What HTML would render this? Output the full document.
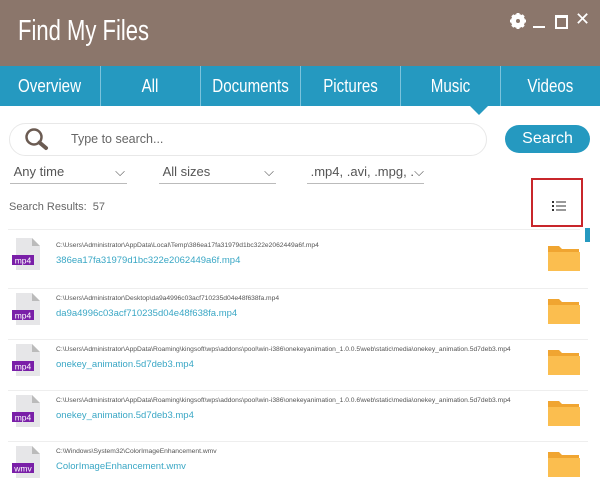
<!DOCTYPE html><html><head><style>
body{margin:0;width:600px;height:476px;overflow:hidden;background:#fff;font-family:"Liberation Sans",sans-serif;position:relative}
.a{position:absolute}
.hdr{left:0;top:0;width:600px;height:66px;background:#8b766b}
.title{left:18px;top:15px;color:#fff;font-size:29px;transform:scaleX(0.76);transform-origin:left}
.tabs{left:0;top:66px;width:600px;height:40px;background:#2599c0}
.tab{position:absolute;top:0;height:40px;line-height:40px;text-align:center;color:#fff;font-size:18px;width:100px;border-left:1px solid #7cc3dc;box-sizing:border-box}
.tab span{display:inline-block;transform:scaleX(0.84)}
.dd{position:absolute;top:164px;height:19px;border-bottom:1px solid #bbb;color:#555;font-size:13px}
.row{position:absolute;left:0;width:590px;height:51px}
.sep{position:absolute;left:8px;width:580px;top:0;border-top:1px solid #eee}
.fi{position:absolute;left:12px;top:6px;width:28px;height:32px}
.path{position:absolute;left:56px;top:10px;font-size:6.7px;color:#555;white-space:nowrap}
.name{position:absolute;left:56px;top:23px;font-size:9.5px;color:#3aa7c5}
.fold{position:absolute;left:547px;top:10px}
</style></head><body>
<div class="a hdr"></div>
<div class="a title">Find My Files</div>
<svg class="a" style="left:509px;top:12px" width="18" height="18" viewBox="0 0 18 18"><circle cx="9" cy="9" r="5.5" fill="none" stroke="#fff" stroke-width="3"/><g stroke="#fff" stroke-width="3"><line x1="9" y1="1" x2="9" y2="17"/><line x1="1" y1="9" x2="17" y2="9"/><line x1="3.3" y1="3.3" x2="14.7" y2="14.7"/><line x1="14.7" y1="3.3" x2="3.3" y2="14.7"/></g><circle cx="9" cy="9" r="2" fill="#8b766b"/></svg>
<div class="a" style="left:533px;top:26px;width:12px;height:2px;background:#fff"></div>
<div class="a" style="left:555px;top:15px;width:9px;height:9px;border:2px solid #fff;border-top-width:3px"></div>
<div class="a" style="left:575px;top:9px;color:#fff;font-size:18px">✕</div>
<div class="a tabs">
<div class="tab" style="left:0;border:0"><span>Overview</span></div>
<div class="tab" style="left:100px"><span>All</span></div>
<div class="tab" style="left:200px"><span>Documents</span></div>
<div class="tab" style="left:300px"><span>Pictures</span></div>
<div class="tab" style="left:400px"><span>Music</span></div>
<div class="tab" style="left:500px"><span>Videos</span></div>
</div>
<div class="a" style="left:470px;top:106px;width:0;height:0;border-left:9px solid transparent;border-right:9px solid transparent;border-top:9px solid #2599c0"></div>
<div class="a" style="left:9px;top:123px;width:476px;height:31px;border:1px solid #e8e8e8;border-radius:17px"></div>
<svg class="a" style="left:24px;top:127px" width="26" height="24" viewBox="0 0 26 24"><circle cx="10" cy="10" r="7.5" fill="none" stroke="#6b5b52" stroke-width="2.5"/><line x1="15.5" y1="15.5" x2="22" y2="21" stroke="#6b5b52" stroke-width="4" stroke-linecap="round"/></svg>
<div class="a" style="left:71px;top:132px;font-size:12.5px;color:#666">Type to search...</div>
<div class="a" style="left:505px;top:125px;width:85px;height:28px;border-radius:14px;background:#2599c0;color:#fff;font-size:16px;line-height:28px;text-align:center">Search</div>
<div class="dd" style="left:10px;width:117px">&nbsp;Any time<span style="position:absolute;right:2px">⌵</span></div>
<div class="dd" style="left:159px;width:117px">&nbsp;All sizes<span style="position:absolute;right:2px">⌵</span></div>
<div class="dd" style="left:307px;width:117px;overflow:hidden;white-space:nowrap">&nbsp;.mp4, .avi, .mpg, .<span style="position:absolute;right:0;background:#fff">⌵</span></div>
<div class="a" style="left:9px;top:201px;font-size:11px;color:#666">Search Results:&nbsp; 57</div>
<div class="a" style="left:531px;top:178px;width:48px;height:45px;border:2px solid #c8262b"></div>
<svg class="a" style="left:552px;top:200px" width="14" height="12"><g fill="#333"><rect x="0" y="1" width="2" height="2"/><rect x="0" y="5" width="2" height="2"/><rect x="0" y="9" width="2" height="2"/><rect x="4" y="1.5" width="10" height="1"/><rect x="4" y="5.5" width="10" height="1"/><rect x="4" y="9.5" width="10" height="1"/></g></svg>
<div class="a" style="left:585px;top:228px;width:5px;height:14px;background:#2599c0"></div>
<div class="a" style="left:8px;top:229px;width:572px;border-top:1px solid #eee"></div>

<div class="row" style="top:232px"><svg class="fi" viewBox="0 0 28 32"><path d="M4 0H20L28 8V32H4Z" fill="#e6e6e8"/><path d="M20 0V8H28" fill="#bbb"/><rect x="0" y="17" width="22" height="10" fill="#7a1fa8"/><text x="11" y="25.5" font-size="8.5" fill="#fff" text-anchor="middle" font-family="Liberation Sans">mp4</text></svg><div class="path">C:\Users\Administrator\AppData\Local\Temp\386ea17fa31979d1bc322e2062449a6f.mp4</div><div class="name">386ea17fa31979d1bc322e2062449a6f.mp4</div><svg class="fold" width="34" height="30"><path d="M1 4H12L15 7H32V29H1Z" fill="#f0a531"/><path d="M1 10H33V29H1Z" fill="#fbbe4f"/></svg></div>
<div class="row" style="top:283px"><div class="sep" style="top:5px"></div><svg class="fi" style="top:10px" viewBox="0 0 28 32"><path d="M4 0H20L28 8V32H4Z" fill="#e6e6e8"/><path d="M20 0V8H28" fill="#bbb"/><rect x="0" y="17" width="22" height="10" fill="#7a1fa8"/><text x="11" y="25.5" font-size="8.5" fill="#fff" text-anchor="middle" font-family="Liberation Sans">mp4</text></svg><div class="path" style="top:12px">C:\Users\Administrator\Desktop\da9a4996c03acf710235d04e48f638fa.mp4</div><div class="name" style="top:25px">da9a4996c03acf710235d04e48f638fa.mp4</div><svg class="fold" style="top:12px" width="34" height="30"><path d="M1 4H12L15 7H32V29H1Z" fill="#f0a531"/><path d="M1 10H33V29H1Z" fill="#fbbe4f"/></svg></div>
<div class="row" style="top:334px"><div class="sep" style="top:5px"></div><svg class="fi" style="top:10px" viewBox="0 0 28 32"><path d="M4 0H20L28 8V32H4Z" fill="#e6e6e8"/><path d="M20 0V8H28" fill="#bbb"/><rect x="0" y="17" width="22" height="10" fill="#7a1fa8"/><text x="11" y="25.5" font-size="8.5" fill="#fff" text-anchor="middle" font-family="Liberation Sans">mp4</text></svg><div class="path" style="top:12px">C:\Users\Administrator\AppData\Roaming\kingsoft\wps\addons\pool\win-i386\onekeyanimation_1.0.0.5\web\static\media\onekey_animation.5d7deb3.mp4</div><div class="name" style="top:25px">onekey_animation.5d7deb3.mp4</div><svg class="fold" style="top:12px" width="34" height="30"><path d="M1 4H12L15 7H32V29H1Z" fill="#f0a531"/><path d="M1 10H33V29H1Z" fill="#fbbe4f"/></svg></div>
<div class="row" style="top:385px"><div class="sep" style="top:5px"></div><svg class="fi" style="top:10px" viewBox="0 0 28 32"><path d="M4 0H20L28 8V32H4Z" fill="#e6e6e8"/><path d="M20 0V8H28" fill="#bbb"/><rect x="0" y="17" width="22" height="10" fill="#7a1fa8"/><text x="11" y="25.5" font-size="8.5" fill="#fff" text-anchor="middle" font-family="Liberation Sans">mp4</text></svg><div class="path" style="top:12px">C:\Users\Administrator\AppData\Roaming\kingsoft\wps\addons\pool\win-i386\onekeyanimation_1.0.0.6\web\static\media\onekey_animation.5d7deb3.mp4</div><div class="name" style="top:25px">onekey_animation.5d7deb3.mp4</div><svg class="fold" style="top:12px" width="34" height="30"><path d="M1 4H12L15 7H32V29H1Z" fill="#f0a531"/><path d="M1 10H33V29H1Z" fill="#fbbe4f"/></svg></div>
<div class="row" style="top:436px"><div class="sep" style="top:5px"></div><svg class="fi" style="top:10px" viewBox="0 0 28 32"><path d="M4 0H20L28 8V32H4Z" fill="#e6e6e8"/><path d="M20 0V8H28" fill="#bbb"/><rect x="0" y="17" width="22" height="10" fill="#7a1fa8"/><text x="11" y="25.5" font-size="8.5" fill="#fff" text-anchor="middle" font-family="Liberation Sans">wmv</text></svg><div class="path" style="top:12px">C:\Windows\System32\ColorImageEnhancement.wmv</div><div class="name" style="top:25px">ColorImageEnhancement.wmv</div><svg class="fold" style="top:12px" width="34" height="30"><path d="M1 4H12L15 7H32V29H1Z" fill="#f0a531"/><path d="M1 10H33V29H1Z" fill="#fbbe4f"/></svg></div>
</body></html>
